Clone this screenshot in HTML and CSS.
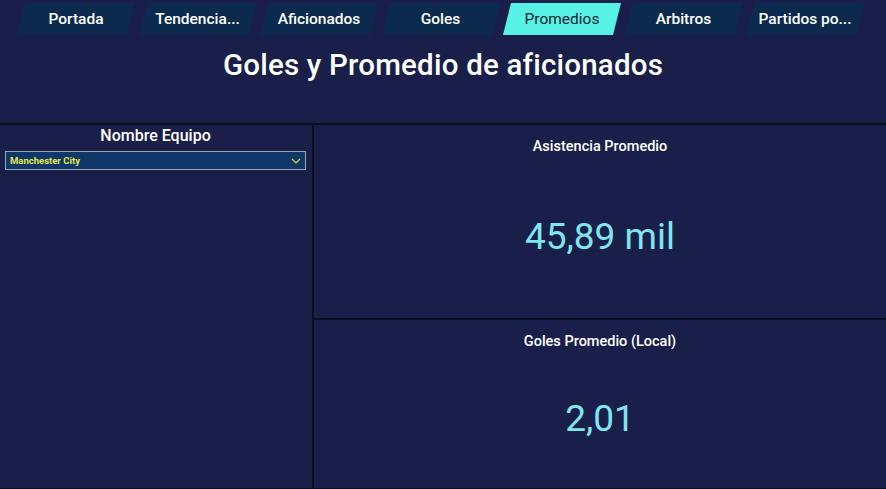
FILE: index.html
```html
<!DOCTYPE html>
<html lang="es">
<head>
<meta charset="utf-8">
<title>Goles y Promedio de aficionados</title>
<link rel="stylesheet" href="styles.css">
</head>
<body>
<div class="page">
  <nav class="tabs">
    <div class="tab"><span>Portada</span></div>
    <div class="tab"><span>Tendencia...</span></div>
    <div class="tab"><span>Aficionados</span></div>
    <div class="tab"><span>Goles</span></div>
    <div class="tab active"><span>Promedios</span></div>
    <div class="tab"><span>Arbitros</span></div>
    <div class="tab"><span>Partidos po...</span></div>
  </nav>
  <h1 class="title">Goles y Promedio de aficionados</h1>
  <div class="content">
    <aside class="filter">
      <div class="filter-title">Nombre Equipo</div>
      <div class="select">
        <span class="select-text">Manchester City</span>
        <svg class="chev" width="10" height="6" viewBox="0 0 10 6"><path d="M1 1 L5 5 L9 1" fill="none" stroke="#d7d64a" stroke-width="1.2"/></svg>
      </div>
    </aside>
    <section class="cards">
      <div class="card card-top">
        <div class="card-title">Asistencia Promedio</div>
        <div class="card-value">45,89 mil</div>
      </div>
      <div class="card">
        <div class="card-title">Goles Promedio (Local)</div>
        <div class="card-value">2,01</div>
      </div>
    </section>
  </div>
</div>
</body>
</html>
```
FILE: styles.css
```css
* { box-sizing: border-box; }
html, body { margin: 0; padding: 0; }
body {
  background: #1a1f4a;
  font-family: Roboto, "DejaVu Sans", sans-serif;
  color: #ffffff;
  width: 886px;
  height: 489px;
  overflow: hidden;
}
.page { display: flex; flex-direction: column; height: 489px; }
.tabs {
  display: flex;
  gap: 11.5px;
  padding: 3px 0 0 21px;
  height: 35px;
}
.tab {
  width: 110px;
  height: 32px;
  display: flex;
  align-items: center;
  justify-content: center;
  position: relative;
}
.tab::before {
  content: "";
  position: absolute;
  inset: 0;
  background: #0b2a4e;
  transform: skewX(-14deg);
}
.tab span {
  position: relative;
  font-size: 15.5px;
  font-weight: 500;
  color: #ffffff;
  white-space: nowrap;
}
.tab.active::before { background: #56f2e6; }
.tab.active span { color: #1a1f30; font-weight: 400; }
.title {
  margin: 0;
  text-align: center;
  font-size: 29.5px;
  font-weight: 500;
  height: 64px;
  padding-top: 13px;
  line-height: 34px;
  letter-spacing: 0.2px;
}
.content {
  flex: 1;
  display: flex;
  border-top: 2px solid #0b0e1e;
  border-bottom: 1px solid #0b0e1e;
  margin-top: 24px;
}
.filter {
  width: 314px;
  border-right: 2px solid #0b0e1e;
  padding: 1px 6px 0 5px;
}
.filter-title {
  text-align: center;
  font-size: 16px;
  font-weight: 500;
  line-height: 20px;
  margin-bottom: 5px;
}
.select {
  height: 19px;
  background: #0f3869;
  border: 1px solid #9aa3b4;
  display: flex;
  align-items: center;
  justify-content: space-between;
  padding: 0 4px 0 4px;
}
.select-text {
  font-size: 9.5px;
  font-weight: 700;
  color: #e4e84a;
}
.cards { flex: 1; display: flex; flex-direction: column; }
.card {
  flex: 1;
  display: flex;
  flex-direction: column;
  align-items: center;
}
.card-top { flex: 0 0 193px; }
.card + .card { border-top: 2px solid #0b0e1e; }
.card-title {
  font-size: 14.5px;
  font-weight: 500;
  margin-top: 13px;
  line-height: 18px;
}
.card-value {
  flex: 1;
  display: flex;
  align-items: center;
  font-size: 37px;
  color: #7fe6ee;
  padding-bottom: 2px;
}
```
